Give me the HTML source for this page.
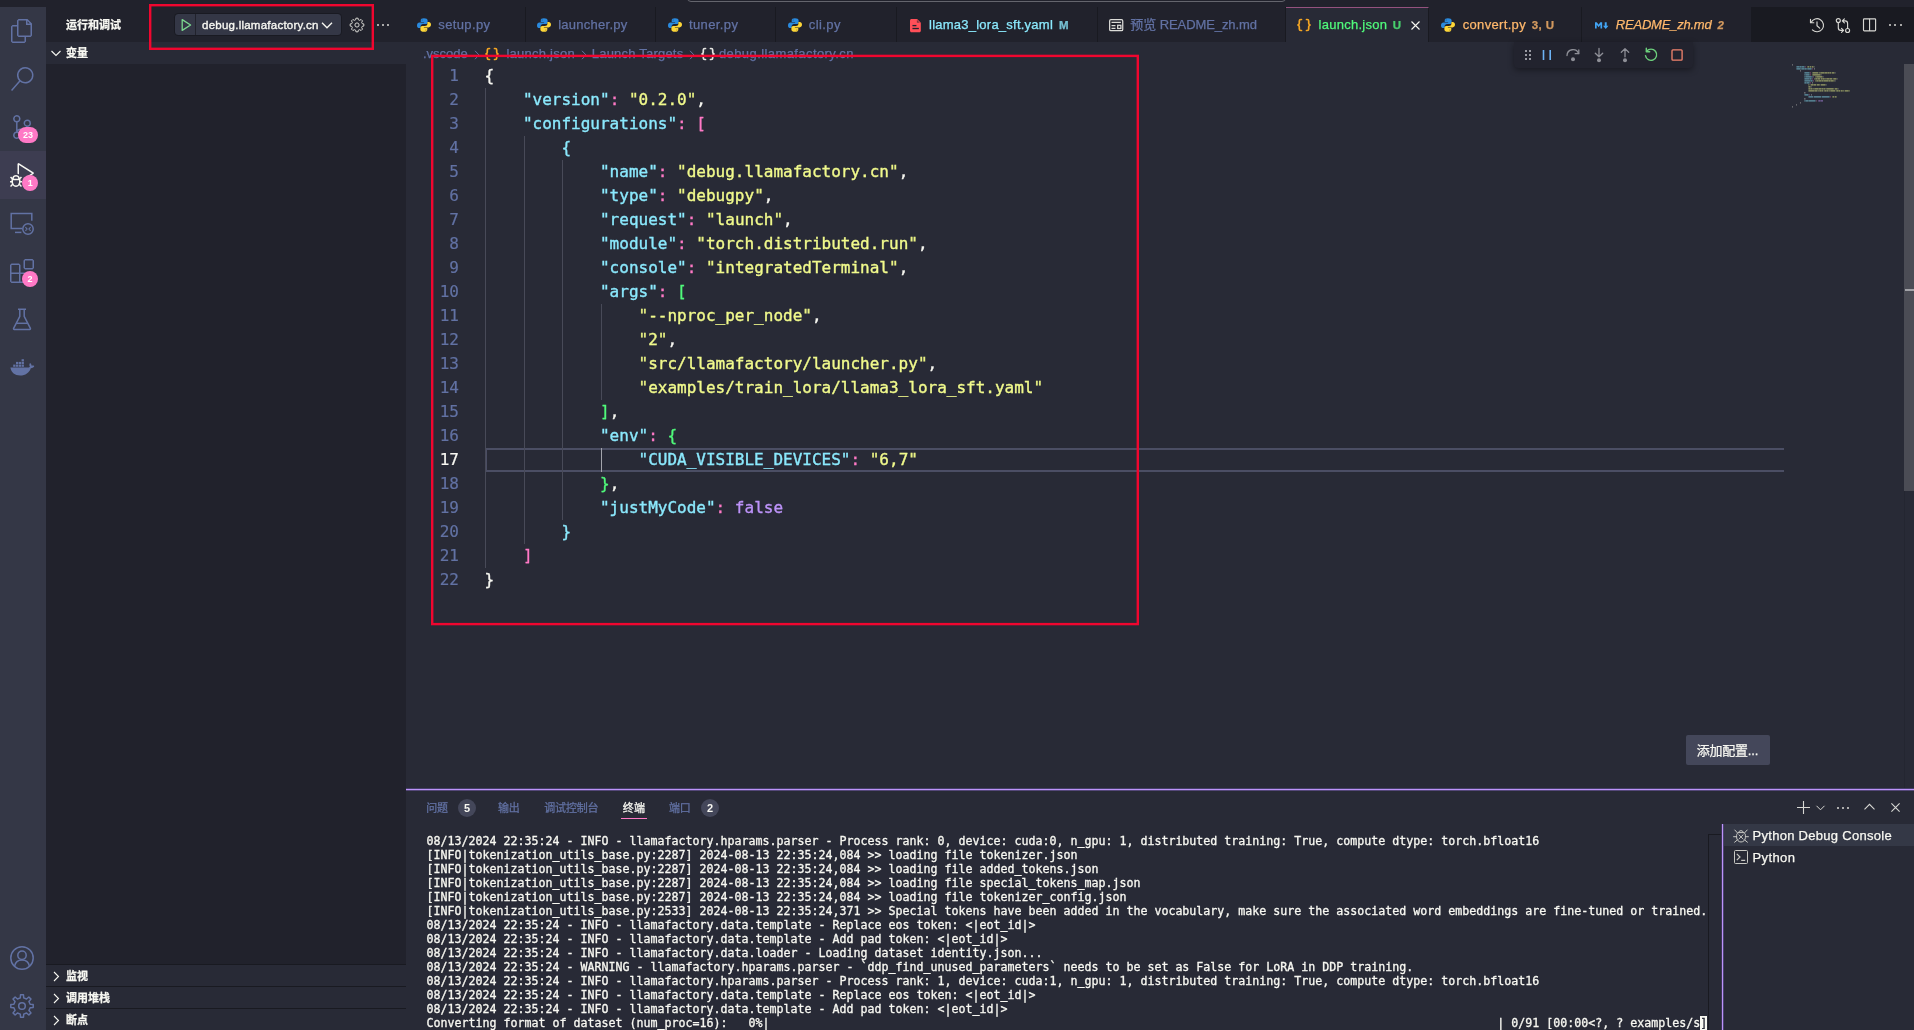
<!DOCTYPE html>
<html lang="zh-CN"><head><meta charset="utf-8"><title>launch.json - Visual Studio Code</title>
<style>
*{box-sizing:border-box;margin:0;padding:0}
html,body{width:1914px;height:1030px;overflow:hidden;background:#282a36}
body{font-family:'Liberation Sans','Noto Sans CJK SC',sans-serif;font-size:13px;color:#f8f8f2;position:relative}
.a{position:absolute}
#root{position:absolute;left:0;top:0;width:1914px;height:1030px;will-change:transform}
.t{position:absolute;white-space:pre;-webkit-text-stroke:.25px}
svg{position:absolute;overflow:visible}
.code{position:absolute;left:484.400px;top:64px;font-family:'DejaVu Sans Mono','Liberation Mono','Noto Sans CJK SC',monospace;font-size:16px;line-height:24px;white-space:pre;color:#f8f8f2;-webkit-text-stroke:.35px}
.ln{position:absolute;left:406px;top:64px;width:53px;text-align:right;font-family:'DejaVu Sans Mono','Liberation Mono','Noto Sans CJK SC',monospace;font-size:16px;line-height:24px;color:#6272a4;white-space:pre;-webkit-text-stroke:.2px}
.k{color:#8be9fd}.s{color:#f1fa8c}.q{color:#e9f284}.p{color:#ff79c6}.c{color:#8be9fd}.g{color:#50fa7b}.v{color:#bd93f9}
.term{position:absolute;left:426.500px;top:834px;font-family:'DejaVu Sans Mono','Liberation Mono','Noto Sans CJK SC',monospace;font-size:11.63px;line-height:14px;white-space:pre;color:#f8f8f2;-webkit-text-stroke:.3px}
.guide{position:absolute;width:1px;background:#484a58}
</style></head>
<body>
<div id="root">
<div class="a" style="left:0px;top:0px;width:1914px;height:7px;background:#21222c;"></div>
<div class="a" style="left:0px;top:7px;width:46px;height:1023px;background:#343746;"></div>
<div class="a" style="left:46px;top:7px;width:360px;height:1023px;background:#21222c;"></div>
<div class="a" style="left:406px;top:7px;width:1508px;height:35px;background:#191a21;"></div>
<div class="a" style="left:406px;top:42px;width:1508px;height:747px;background:#282a36;"></div>
<div class="a" style="left:687px;top:-6px;width:599px;height:8px;background:transparent;border:1.300px solid #64656d;border-radius:6px;"></div>
<div class="a" style="left:0px;top:151px;width:46px;height:48px;background:#3d3d51;"></div>
<svg style="left:10px;top:19px" width="24" height="24" viewBox="0 0 24 24" ><path fill="#6272a4" d="M17.5 0h-9L7 1.5V6H2.5L1 7.5v15.07L2.5 24h12.07L16 22.57V18h4.7l1.3-1.43V4.5L17.5 0zm0 2.12l2.38 2.38H17.5V2.12zm-3 20.38h-12v-15H7v9.07L8.5 18h6v4.5zm6-6h-12v-15H16V6h4.5v10.5z"/></svg>
<svg style="left:10px;top:67px" width="24" height="24" viewBox="0 0 24 24" ><path fill="#6272a4" d="M15.25 0a8.25 8.25 0 0 0-6.18 13.72L1 22.88l1.12 1 8.05-9.12A8.251 8.251 0 1 0 15.25.01V0zm0 15a6.75 6.75 0 1 1 0-13.5 6.75 6.75 0 0 1 0 13.5z"/></svg>
<svg style="left:10px;top:115px" width="24" height="24" viewBox="0 0 24 24" ><path fill="#6272a4" d="M21.007 8.222A3.738 3.738 0 0 0 15.045 5.2a3.737 3.737 0 0 0 1.156 6.583 2.988 2.988 0 0 1-2.668 1.67h-2.99a4.456 4.456 0 0 0-2.989 1.165V7.4a3.737 3.737 0 1 0-1.494 0v9.117a3.776 3.776 0 1 0 1.816.099 2.99 2.99 0 0 1 2.668-1.667h2.99a4.484 4.484 0 0 0 4.223-3.039 3.736 3.736 0 0 0 3.25-3.687zM4.565 3.738a2.242 2.242 0 1 1 4.484 0 2.242 2.242 0 0 1-4.484 0zm4.484 16.441a2.242 2.242 0 1 1-4.484 0 2.242 2.242 0 0 1 4.484 0zm8.221-9.715a2.242 2.242 0 1 1 0-4.485 2.242 2.242 0 0 1 0 4.485z"/></svg>
<svg style="left:10px;top:163px" width="24" height="24" viewBox="0 0 24 24" ><path fill="#f8f8f2" d="M10.94 13.5l-1.32 1.32a3.73 3.73 0 0 0-7.24 0L1.06 13.5 0 14.56l1.72 1.72-.22.22V18H0v1.5h1.5v.08c.077.489.214.966.41 1.42L0 22.94 1.06 24l1.65-1.65A4.308 4.308 0 0 0 6 24a4.31 4.31 0 0 0 3.29-1.65L10.94 24 12 22.94 10.09 21c.198-.464.336-.951.41-1.45v-.1H12V18h-1.5v-1.5l-.22-.22L12 14.56l-1.06-1.06zM6 13.5a2.25 2.25 0 0 1 2.25 2.25h-4.5A2.25 2.25 0 0 1 6 13.5zm3 6a3.33 3.33 0 0 1-3 3 3.33 3.33 0 0 1-3-3v-2.25h6v2.25zm14.76-9.9v1.26L13.5 17.37V15.6l8.5-5.37L9 2v9.46a5.07 5.07 0 0 0-1.5-.72V.63L8.64 0l15.12 9.6z"/></svg>
<svg style="left:10px;top:211px" width="24" height="24" viewBox="0 0 24 24" ><g fill="none" stroke="#6272a4" stroke-width="1.5"><path d="M12.2 17.6H1.2V2.6h20.6v7.2"/><path d="M5 21.4h6.4"/><circle cx="18" cy="18" r="5.2"/><path stroke-width="1.1" d="M15.4 16.2l1.7 1.8-1.7 1.8M20.6 16.2l-1.7 1.8 1.7 1.8"/></g></svg>
<svg style="left:10px;top:259px" width="24" height="24" viewBox="0 0 24 24" ><path fill="#6272a4" d="M13.5 1.5L15 0h7.5L24 1.5V9l-1.5 1.5H15L13.5 9V1.5zm1.5 0V9h7.5V1.5H15zM0 15V6l1.500-1.500H9L10.500 6v7.500H18l1.500 1.500v7.500L18 24H1.500L0 22.500V15zm9-1.500V6H1.500v7.500H9zM9 15H1.500v7.500H9V15zm1.500 7.500H18V15h-7.500v7.500z"/></svg>
<svg style="left:10px;top:307px" width="24" height="24" viewBox="0 0 24 24" ><g fill="none" stroke="#6272a4" stroke-width="1.5" stroke-linejoin="round"><path d="M8 2.2h8M9.8 2.2v7.2L3.6 21.4a.7.7 0 0 0 .6 1h15.6a.7.7 0 0 0 .6-1L14.200 9.400V2.200"/><path d="M6.300 16.300h11.400"/></g></svg>
<svg style="left:10px;top:356px" width="24" height="24" viewBox="0 0 24 24" ><g fill="#6272a4"><rect x="3.2" y="8.6" width="2.3" height="2.2"/><rect x="6.0" y="8.6" width="2.3" height="2.2"/><rect x="8.8" y="8.6" width="2.3" height="2.2"/><rect x="11.6" y="8.6" width="2.3" height="2.2"/><rect x="6.0" y="5.9" width="2.3" height="2.2"/><rect x="8.8" y="5.9" width="2.3" height="2.2"/><rect x="11.6" y="5.9" width="2.3" height="2.2"/><rect x="11.6" y="3.2" width="2.3" height="2.2"/><path d="M0.400 11.600h17.300c.9 0 1.700-.300 2.200-.900-.700-1-.800-2.600.100-3.700 1 .700 1.600 1.700 1.700 2.700.9-.300 1.900-.200 2.600.300-.400 1.300-1.700 2.200-3.500 2.200-1.600 4.600-5.300 7.300-10.600 7.300-5.400 0-8.900-2.500-9.800-7.900z"/></g></svg>
<svg style="left:10px;top:946px" width="24" height="24" viewBox="0 0 24 24" ><g fill="none" stroke="#6272a4" stroke-width="1.5"><circle cx="12" cy="12" r="11.2"/><circle cx="12" cy="9.300" r="4.200"/><path d="M4.600 20.200c.6-3.700 3.600-6.200 7.400-6.200s6.800 2.500 7.400 6.200"/></g></svg>
<svg style="left:10px;top:994px" width="24" height="24" viewBox="0 0 24 24" ><g fill="none" stroke="#6272a4" stroke-width="1.5" stroke-linejoin="round"><path d="M10.30 3.88 L10.51 0.80 L13.49 0.80 L13.70 3.88 L16.54 5.05 L18.87 3.03 L20.97 5.13 L18.95 7.46 L20.12 10.30 L23.20 10.51 L23.20 13.49 L20.12 13.70 L18.95 16.54 L20.97 18.87 L18.87 20.97 L16.54 18.95 L13.70 20.12 L13.49 23.20 L10.51 23.20 L10.30 20.12 L7.46 18.95 L5.13 20.97 L3.03 18.87 L5.05 16.54 L3.88 13.70 L0.80 13.49 L0.80 10.51 L3.88 10.30 L5.05 7.46 L3.03 5.13 L5.13 3.03 L7.46 5.05Z"/><circle cx="12" cy="12" r="3.300"/></g></svg>
<div class="a" style="left:18.0px;top:127.0px;width:20px;height:16px;border-radius:8.0px;background:#ff79c6;color:#fff;font-size:9px;font-weight:700;line-height:16px;text-align:center">23</div>
<div class="a" style="left:22.3px;top:175.0px;width:16px;height:16px;border-radius:8.0px;background:#ff79c6;color:#fff;font-size:9px;font-weight:700;line-height:16px;text-align:center">1</div>
<div class="a" style="left:22.0px;top:271.0px;width:16px;height:16px;border-radius:8.0px;background:#ff79c6;color:#fff;font-size:9px;font-weight:700;line-height:16px;text-align:center">2</div>
<div class="a" style="left:175px;top:14px;width:166px;height:21px;background:#343746;border-radius:3.500px;box-shadow:0 0 0 1px rgba(0,0,0,.22);"></div>
<div class="a" style="left:195px;top:14px;width:1px;height:21px;background:#21222c;"></div>
<svg style="left:178px;top:17px" width="16" height="16" viewBox="0 0 16 16" ><path fill="none" stroke="#7bd88f" stroke-width="1.300" stroke-linejoin="round" d="M4.200 2.600v10.800L12.600 8z"/></svg>
<svg style="left:321px;top:17px" width="12" height="16" viewBox="0 0 12 16" ><path fill="none" stroke="#f8f8f2" stroke-width="1.300" d="M1 5.800l5 5 5-5"/></svg>
<svg style="left:349px;top:17px" width="16" height="16" viewBox="0 0 16 16" ><g fill="none" stroke="#d6d6d2" stroke-width="1" stroke-linejoin="round"><path d="M6.69 2.76 L6.92 1.18 L9.08 1.18 L9.31 2.76 L10.78 3.37 L12.06 2.42 L13.58 3.94 L12.63 5.22 L13.24 6.69 L14.82 6.92 L14.82 9.08 L13.24 9.31 L12.63 10.78 L13.58 12.06 L12.06 13.58 L10.78 12.63 L9.31 13.24 L9.08 14.82 L6.92 14.82 L6.69 13.24 L5.22 12.63 L3.94 13.58 L2.42 12.06 L3.37 10.78 L2.76 9.31 L1.18 9.08 L1.18 6.92 L2.76 6.69 L3.37 5.22 L2.42 3.94 L3.94 2.42 L5.22 3.37Z"/><circle cx="8" cy="8" r="2.100"/></g></svg>
<div class="a" style="left:377px;top:24px;width:2px;height:2px;background:#f8f8f2;border-radius:1px;opacity:.85;"></div>
<div class="a" style="left:382px;top:24px;width:2px;height:2px;background:#f8f8f2;border-radius:1px;opacity:.85;"></div>
<div class="a" style="left:387px;top:24px;width:2px;height:2px;background:#f8f8f2;border-radius:1px;opacity:.85;"></div>
<div class="a" style="left:46px;top:42px;width:360px;height:22px;background:#282a36;"></div>
<svg style="left:51px;top:48px" width="10" height="10" viewBox="0 0 10 10" ><path fill="none" stroke="#f8f8f2" stroke-width="1.100" d="M0.500 3l4.500 4.500L9.500 3"/></svg>
<div class="a" style="left:46px;top:964px;width:360px;height:22px;background:#282a36;border-top:1px solid #191a21;"></div>
<svg style="left:52px;top:971px" width="8" height="11" viewBox="0 0 8 11" ><path fill="none" stroke="#f8f8f2" stroke-width="1.100" d="M2 1l4.500 4.500L2 10"/></svg>
<div class="a" style="left:46px;top:986px;width:360px;height:22px;background:#282a36;border-top:1px solid #191a21;"></div>
<svg style="left:52px;top:993px" width="8" height="11" viewBox="0 0 8 11" ><path fill="none" stroke="#f8f8f2" stroke-width="1.100" d="M2 1l4.500 4.500L2 10"/></svg>
<div class="a" style="left:46px;top:1008px;width:360px;height:22px;background:#282a36;border-top:1px solid #191a21;"></div>
<svg style="left:52px;top:1015px" width="8" height="11" viewBox="0 0 8 11" ><path fill="none" stroke="#f8f8f2" stroke-width="1.100" d="M2 1l4.500 4.500L2 10"/></svg>
<div class="a" style="left:406px;top:7px;width:120px;height:35px;background:#21222c;border-right:1px solid #191a21;"></div>
<svg style="left:416px;top:17px" width="16" height="16" viewBox="0 0 16 16" ><path fill="#2a8ade" d="M7.900 1.200c-2.300 0-3.200.9-3.200 2.100v1.700h3.400v.6H3.400C2 5.600 1 6.700 1 8.400c0 1.700 1 2.700 2.300 2.700h1.300V9.300c0-1.300 1.100-2.300 2.400-2.300h2.800c1 0 1.800-.8 1.800-1.800V3.300c0-1.200-1.300-2.100-3.700-2.100z"/><circle cx="6.100" cy="3.100" r=".5" fill="#21222c" opacity=".6"/><path fill="#fdd638" d="M8.100 14.800c2.300 0 3.200-.9 3.200-2.100V11H7.900v-.6h4.700c1.400 0 2.400-1.100 2.400-2.800 0-1.700-1-2.700-2.300-2.700h-1.300v1.800c0 1.300-1.100 2.300-2.400 2.300H6.200c-1 0-1.800.8-1.800 1.800v1.900c0 1.200 1.300 2.100 3.700 2.100z"/><circle cx="9.900" cy="12.900" r=".5" fill="#21222c" opacity=".6"/></svg>
<div class="a" style="left:526px;top:7px;width:130px;height:35px;background:#21222c;border-right:1px solid #191a21;"></div>
<svg style="left:536px;top:17px" width="16" height="16" viewBox="0 0 16 16" ><path fill="#2a8ade" d="M7.900 1.200c-2.300 0-3.200.9-3.200 2.100v1.700h3.400v.6H3.400C2 5.600 1 6.700 1 8.400c0 1.700 1 2.700 2.300 2.700h1.300V9.300c0-1.300 1.100-2.300 2.400-2.300h2.800c1 0 1.800-.8 1.800-1.800V3.300c0-1.200-1.300-2.100-3.700-2.100z"/><circle cx="6.100" cy="3.100" r=".5" fill="#21222c" opacity=".6"/><path fill="#fdd638" d="M8.100 14.800c2.300 0 3.200-.9 3.200-2.100V11H7.900v-.6h4.700c1.400 0 2.400-1.100 2.400-2.800 0-1.700-1-2.700-2.300-2.700h-1.300v1.800c0 1.300-1.100 2.300-2.400 2.300H6.200c-1 0-1.800.8-1.800 1.800v1.900c0 1.200 1.300 2.100 3.700 2.100z"/><circle cx="9.900" cy="12.900" r=".5" fill="#21222c" opacity=".6"/></svg>
<div class="a" style="left:656px;top:7px;width:120px;height:35px;background:#21222c;border-right:1px solid #191a21;"></div>
<svg style="left:667px;top:17px" width="16" height="16" viewBox="0 0 16 16" ><path fill="#2a8ade" d="M7.900 1.200c-2.300 0-3.200.9-3.200 2.100v1.700h3.400v.6H3.400C2 5.600 1 6.700 1 8.400c0 1.700 1 2.700 2.300 2.700h1.300V9.300c0-1.300 1.100-2.300 2.400-2.300h2.800c1 0 1.800-.8 1.800-1.800V3.300c0-1.200-1.300-2.100-3.700-2.100z"/><circle cx="6.100" cy="3.100" r=".5" fill="#21222c" opacity=".6"/><path fill="#fdd638" d="M8.100 14.800c2.300 0 3.200-.9 3.200-2.100V11H7.900v-.6h4.700c1.400 0 2.400-1.100 2.400-2.800 0-1.700-1-2.700-2.300-2.700h-1.300v1.800c0 1.300-1.100 2.300-2.400 2.300H6.200c-1 0-1.800.8-1.800 1.800v1.900c0 1.200 1.300 2.100 3.700 2.100z"/><circle cx="9.900" cy="12.900" r=".5" fill="#21222c" opacity=".6"/></svg>
<div class="a" style="left:776px;top:7px;width:121px;height:35px;background:#21222c;border-right:1px solid #191a21;"></div>
<svg style="left:787px;top:17px" width="16" height="16" viewBox="0 0 16 16" ><path fill="#2a8ade" d="M7.900 1.200c-2.300 0-3.200.9-3.200 2.100v1.700h3.400v.6H3.400C2 5.600 1 6.700 1 8.400c0 1.700 1 2.700 2.300 2.700h1.300V9.300c0-1.300 1.100-2.300 2.400-2.300h2.800c1 0 1.800-.8 1.800-1.800V3.300c0-1.200-1.300-2.100-3.700-2.100z"/><circle cx="6.100" cy="3.100" r=".5" fill="#21222c" opacity=".6"/><path fill="#fdd638" d="M8.100 14.800c2.300 0 3.200-.9 3.200-2.100V11H7.900v-.6h4.700c1.400 0 2.400-1.100 2.400-2.800 0-1.700-1-2.700-2.300-2.700h-1.300v1.800c0 1.300-1.100 2.300-2.400 2.300H6.200c-1 0-1.800.8-1.800 1.800v1.900c0 1.200 1.300 2.100 3.700 2.100z"/><circle cx="9.900" cy="12.900" r=".5" fill="#21222c" opacity=".6"/></svg>
<div class="a" style="left:897px;top:7px;width:200.5px;height:35px;background:#21222c;border-right:1px solid #191a21;"></div>
<svg style="left:909.5px;top:18.8px" width="11.3" height="13.2" viewBox="0 0 12 14" ><path fill="#ff4f58" d="M1.600 0h6L11.500 3.900V12.400c0 .9-.7 1.600-1.600 1.600H1.600C.7 14 0 13.300 0 12.400V1.600C0 .7.700 0 1.600 0z"/><path fill="#21222c" d="M7.300 .9v3.200h3.200z" opacity=".55"/><rect x="2.600" y="6.300" width="4.200" height="1.400" fill="#21222c"/><rect x="2.600" y="9.400" width="6.800" height="1.400" fill="#21222c"/></svg>
<div class="a" style="left:1097.5px;top:7px;width:188.5px;height:35px;background:#21222c;border-right:1px solid #191a21;"></div>
<svg style="left:1108.7px;top:18.7px" width="14.4" height="12.4" viewBox="0 0 14.4 12.4" ><g fill="none" stroke="#dcdcd8" stroke-width="1.250"><rect x=".65" y=".65" width="13.100" height="11.100" rx="1.300"/><path d="M2.500 3.500h9.400M2.500 6.700h4M2.500 9.300h4"/><rect x="8.700" y="6.300" width="3.200" height="3.200"/></g></svg>
<div class="a" style="left:1286px;top:7px;width:143px;height:35px;background:#282a36;border-right:1px solid #191a21;border-top:1px solid #94527e;"></div>
<svg style="left:1296px;top:17px" width="16" height="16" viewBox="0 0 16 16" ><g fill="none" stroke="#f5a623" stroke-width="1.700" stroke-linecap="round" stroke-linejoin="round"><path d="M5.500 2.500H4.800c-.9 0-1.500.6-1.500 1.500v2.200c0 .8-.5 1.500-1.400 1.800.9.300 1.400 1 1.400 1.800V12c0 .9.600 1.500 1.500 1.500h.7"/><path d="M10.500 2.500h.7c.9 0 1.500.6 1.500 1.500v2.200c0 .8.500 1.500 1.400 1.800-.9.300-1.400 1-1.400 1.800V12c0 .9-.6 1.500-1.500 1.500h-.7"/></g></svg>
<div class="a" style="left:1429px;top:7px;width:153px;height:35px;background:#21222c;border-right:1px solid #191a21;"></div>
<svg style="left:1440px;top:17px" width="16" height="16" viewBox="0 0 16 16" ><path fill="#2a8ade" d="M7.900 1.200c-2.300 0-3.200.9-3.200 2.100v1.700h3.400v.6H3.400C2 5.600 1 6.700 1 8.400c0 1.700 1 2.700 2.300 2.700h1.300V9.300c0-1.300 1.100-2.300 2.400-2.300h2.800c1 0 1.800-.8 1.800-1.800V3.300c0-1.200-1.300-2.100-3.700-2.100z"/><circle cx="6.100" cy="3.100" r=".5" fill="#21222c" opacity=".6"/><path fill="#fdd638" d="M8.100 14.800c2.300 0 3.200-.9 3.200-2.100V11H7.900v-.6h4.700c1.400 0 2.400-1.100 2.400-2.800 0-1.700-1-2.700-2.300-2.700h-1.300v1.800c0 1.300-1.100 2.300-2.400 2.300H6.200c-1 0-1.800.8-1.800 1.800v1.900c0 1.200 1.300 2.100 3.700 2.100z"/><circle cx="9.900" cy="12.900" r=".5" fill="#21222c" opacity=".6"/></svg>
<div class="a" style="left:1582px;top:7px;width:170px;height:35px;background:#21222c;border-right:1px solid #191a21;"></div>
<svg style="left:1594.5px;top:20.5px" width="14.3" height="8.94" viewBox="0 0 16 10" ><path fill="#42a5f5" d="M0 8.500v-7h2l2 2.600 2-2.600h2v7H6.100V4.300L4 6.900 1.900 4.300v4.200zM12 8.900L8.900 5.300h2V1.500h2.200v3.800h2z"/></svg>
<svg style="left:1411px;top:20.5px" width="9" height="9" viewBox="0 0 9 9" ><path fill="none" stroke="#f8f8f2" stroke-width="1.100" d="M.5.5l8 8M8.500.5l-8 8"/></svg>
<svg style="left:1809px;top:17px" width="16" height="16" viewBox="0 0 16 16" ><g fill="none" stroke="#d8d8d4" stroke-width="1.150" stroke-linecap="round" stroke-linejoin="round"><path d="M2.100 5.500A6.500 6.500 0 1 1 3.400 12.800"/><path d="M1.500 2.400v3.300h3.300"/><path d="M8 4.800v3.900l2.700 2.400"/></g></svg>
<svg style="left:1835px;top:17px" width="16" height="16" viewBox="0 0 16 16" ><g fill="none" stroke="#d8d8d4" stroke-width="1.150" stroke-linecap="round" stroke-linejoin="round"><circle cx="3.300" cy="3.600" r="2"/><circle cx="12.600" cy="13.500" r="2"/><path d="M3.300 5.700v5c0 1.500 1 2.600 2.500 2.600h2.600M6.500 11.300l2.100 2-2.100 2"/><path d="M12.600 11.400V6.400c0-1.500-1-2.600-2.500-2.600H7.500M9.400 1.800l-2.100 2 2.100 2"/></g></svg>
<svg style="left:1862px;top:17px" width="16" height="16" viewBox="0 0 16 16" ><g fill="none" stroke="#d8d8d4" stroke-width="1.150"><rect x="1.500" y="1.800" width="12.100" height="12.100" rx=".8"/><path d="M7.550 1.800v12.100"/></g></svg>
<div class="a" style="left:1889.0px;top:24px;width:2px;height:2px;background:#d8d8d4;border-radius:1px;"></div>
<div class="a" style="left:1894.3px;top:24px;width:2px;height:2px;background:#d8d8d4;border-radius:1px;"></div>
<div class="a" style="left:1899.6px;top:24px;width:2px;height:2px;background:#d8d8d4;border-radius:1px;"></div>
<svg style="left:473.7px;top:49.5px" width="6" height="10" viewBox="0 0 6 10" ><path fill="none" stroke="#6272a4" stroke-width="1" d="M1 .8l4 4.200-4 4.200"/></svg>
<svg style="left:580.7px;top:49.5px" width="6" height="10" viewBox="0 0 6 10" ><path fill="none" stroke="#6272a4" stroke-width="1" d="M1 .8l4 4.200-4 4.200"/></svg>
<svg style="left:689px;top:49.5px" width="6" height="10" viewBox="0 0 6 10" ><path fill="none" stroke="#6272a4" stroke-width="1" d="M1 .8l4 4.200-4 4.200"/></svg>
<svg style="left:484px;top:46px" width="16" height="16" viewBox="0 0 16 16" ><g fill="none" stroke="#f5a623" stroke-width="1.700" stroke-linecap="round" stroke-linejoin="round"><path d="M5.500 2.500H4.800c-.9 0-1.500.6-1.500 1.500v2.200c0 .8-.5 1.500-1.400 1.800.9.300 1.400 1 1.400 1.800V12c0 .9.600 1.500 1.500 1.500h.7"/><path d="M10.500 2.500h.7c.9 0 1.500.6 1.500 1.500v2.200c0 .8.500 1.500 1.400 1.800-.9.300-1.400 1-1.400 1.800V12c0 .9-.6 1.500-1.500 1.500h-.7"/></g></svg>
<svg style="left:700px;top:46px" width="16" height="16" viewBox="0 0 16 16" ><g fill="none" stroke="#e6e6e2" stroke-width="1.700" stroke-linecap="round" stroke-linejoin="round"><path d="M5.500 2.500H4.800c-.9 0-1.500.6-1.500 1.500v2.200c0 .8-.5 1.500-1.400 1.800.9.300 1.400 1 1.400 1.800V12c0 .9.600 1.500 1.500 1.500h.7"/><path d="M10.500 2.500h.7c.9 0 1.500.6 1.500 1.500v2.200c0 .8.500 1.500 1.400 1.800-.9.300-1.400 1-1.400 1.800V12c0 .9-.6 1.500-1.500 1.500h-.7"/></g></svg>
<div class="a" style="left:485px;top:448px;width:1299px;height:24px;background:transparent;border-top:2px solid #4b4e64;border-bottom:2px solid #4b4e64;border-left:2px solid #4b4e64;"></div>
<div class="guide" style="left:485.00px;top:88px;height:480px;"></div>
<div class="guide" style="left:523.53px;top:136px;height:408px;"></div>
<div class="guide" style="left:562.06px;top:160px;height:360px;"></div>
<div class="guide" style="left:600.59px;top:304px;height:96px;"></div>
<div class="guide" style="left:600.59px;top:448px;height:24px;background:#a3a4ab;"></div>
<div class="code">{
    <span class="k">"version"</span><span class="p">:</span> <span class="q">"</span><span class="s">0.2.0</span><span class="q">"</span>,
    <span class="k">"configurations"</span><span class="p">:</span> <span class="p">[</span>
        <span class="c">{</span>
            <span class="k">"name"</span><span class="p">:</span> <span class="q">"</span><span class="s">debug.llamafactory.cn</span><span class="q">"</span>,
            <span class="k">"type"</span><span class="p">:</span> <span class="q">"</span><span class="s">debugpy</span><span class="q">"</span>,
            <span class="k">"request"</span><span class="p">:</span> <span class="q">"</span><span class="s">launch</span><span class="q">"</span>,
            <span class="k">"module"</span><span class="p">:</span> <span class="q">"</span><span class="s">torch.distributed.run</span><span class="q">"</span>,
            <span class="k">"console"</span><span class="p">:</span> <span class="q">"</span><span class="s">integratedTerminal</span><span class="q">"</span>,
            <span class="k">"args"</span><span class="p">:</span> <span class="g">[</span>
                <span class="q">"</span><span class="s">--nproc_per_node</span><span class="q">"</span>,
                <span class="q">"</span><span class="s">2</span><span class="q">"</span>,
                <span class="q">"</span><span class="s">src/llamafactory/launcher.py</span><span class="q">"</span>,
                <span class="q">"</span><span class="s">examples/train_lora/llama3_lora_sft.yaml</span><span class="q">"</span>
            <span class="g">]</span>,
            <span class="k">"env"</span><span class="p">:</span> <span class="g">{</span>
                <span class="k">"CUDA_VISIBLE_DEVICES"</span><span class="p">:</span> <span class="q">"</span><span class="s">6,7</span><span class="q">"</span>
            <span class="g">}</span>,
            <span class="k">"justMyCode"</span><span class="p">:</span> <span class="v">false</span>
        <span class="c">}</span>
    <span class="p">]</span>
}</div>
<div class="ln">1
2
3
4
5
6
7
8
9
10
11
12
13
14
15
16
<span style="color:#f8f8f2">17</span>
18
19
20
21
22</div>
<svg style="left:1792px;top:64px" width="70" height="44" viewBox="0 0 70 44" ><path d="M0 0.9h1M22 4.9h1M8 6.9h1M20 18.9h1M12 28.9h1M19 30.9h1M12 34.9h1M8 38.9h1M4 40.9h1M0 42.9h1" stroke="#c9c9c6" stroke-width="1.300" opacity="0.5" fill="none"/><path d="M4 2.9h1M12 2.9h1M4 4.9h1M19 4.9h1M12 8.9h1M17 8.9h1M12 10.9h1M17 10.9h1M12 12.9h1M20 12.9h1M12 14.9h1M19 14.9h1M12 16.9h1M20 16.9h1M12 18.9h1M17 18.9h1M12 30.9h1M16 30.9h1M16 32.9h1M37 32.9h1M12 36.9h1M23 36.9h1" stroke="#8be9fd" stroke-width="1.300" opacity="0.34" fill="none"/><path d="M5 2.9h2M8 2.9h1M10 2.9h2M5 4.9h3M10 4.9h2M13 4.9h1M16 4.9h3M13 8.9h4M14 10.9h3M14 12.9h5M13 14.9h4M18 14.9h1M13 16.9h5M19 16.9h1M13 18.9h1M15 18.9h2M13 30.9h3M17 32.9h4M22 32.9h7M30 32.9h7M14 36.9h2M17 36.9h6" stroke="#8be9fd" stroke-width="1.300" opacity="0.58" fill="none"/><path d="M7 2.9h1M9 2.9h1M8 4.9h2M12 4.9h1M14 4.9h2M13 10.9h1M13 12.9h1M19 12.9h1M17 14.9h1M18 16.9h1M14 18.9h1M13 36.9h1M16 36.9h1" stroke="#8be9fd" stroke-width="1.300" opacity="0.42" fill="none"/><path d="M13 2.9h1M20 4.9h1M18 8.9h1M18 10.9h1M21 12.9h1M20 14.9h1M21 16.9h1M18 18.9h1M17 30.9h1M38 32.9h1M24 36.9h1" stroke="#ff79c6" stroke-width="1.300" opacity="0.34" fill="none"/><path d="M15 2.9h1M21 2.9h1M20 8.9h1M42 8.9h1M20 10.9h1M28 10.9h1M23 12.9h1M30 12.9h1M22 14.9h1M44 14.9h1M23 16.9h1M42 16.9h1M16 20.9h1M33 20.9h1M16 22.9h1M18 22.9h1M16 24.9h1M20 24.9h1M33 24.9h1M45 24.9h1M16 26.9h1M25 26.9h1M36 26.9h1M57 26.9h1M40 32.9h1M44 32.9h1" stroke="#f1fa8c" stroke-width="1.300" opacity="0.34" fill="none"/><path d="M16 2.9h1M18 2.9h1M20 2.9h1M21 8.9h5M29 8.9h3M33 8.9h2M36 8.9h1M38 8.9h1M40 8.9h2M21 10.9h7M25 12.9h5M24 14.9h1M26 14.9h2M29 14.9h1M31 14.9h1M35 14.9h2M38 14.9h2M42 14.9h2M25 16.9h1M27 16.9h2M30 16.9h1M32 16.9h4M37 16.9h1M39 16.9h2M19 20.9h2M22 20.9h2M25 20.9h2M29 20.9h4M17 22.9h1M17 24.9h1M19 24.9h1M23 24.9h3M27 24.9h2M30 24.9h1M32 24.9h1M35 24.9h6M43 24.9h2M17 26.9h5M23 26.9h2M28 26.9h1M30 26.9h1M33 26.9h1M35 26.9h1M39 26.9h4M45 26.9h1M47 26.9h1M49 26.9h1M53 26.9h3M41 32.9h1M43 32.9h1" stroke="#f1fa8c" stroke-width="1.300" opacity="0.58" fill="none"/><path d="M17 2.9h1M19 2.9h1M26 8.9h1M39 8.9h1M28 14.9h1M40 14.9h1M17 20.9h2M24 20.9h1M28 20.9h1M42 24.9h1M31 26.9h1M43 26.9h1M48 26.9h1M52 26.9h1M42 32.9h1" stroke="#f1fa8c" stroke-width="1.300" opacity="0.22" fill="none"/><path d="M22 2.9h1M43 8.9h1M29 10.9h1M31 12.9h1M45 14.9h1M43 16.9h1M34 20.9h1M19 22.9h1M46 24.9h1M13 28.9h1M13 34.9h1" stroke="#f8f8f2" stroke-width="1.300" opacity="0.22" fill="none"/><path d="M27 8.9h2M32 8.9h1M35 8.9h1M37 8.9h1M24 12.9h1M23 14.9h1M25 14.9h1M30 14.9h1M32 14.9h3M37 14.9h1M41 14.9h1M24 16.9h1M26 16.9h1M29 16.9h1M31 16.9h1M36 16.9h1M38 16.9h1M41 16.9h1M21 20.9h1M27 20.9h1M18 24.9h1M21 24.9h2M26 24.9h1M29 24.9h1M31 24.9h1M34 24.9h1M41 24.9h1M22 26.9h1M26 26.9h2M29 26.9h1M32 26.9h1M34 26.9h1M37 26.9h2M44 26.9h1M46 26.9h1M50 26.9h2M56 26.9h1" stroke="#f1fa8c" stroke-width="1.300" opacity="0.42" fill="none"/><path d="M21 32.9h1M29 32.9h1" stroke="#8be9fd" stroke-width="1.300" opacity="0.22" fill="none"/><path d="M26 36.9h1M28 36.9h1" stroke="#bd93f9" stroke-width="1.300" opacity="0.42" fill="none"/><path d="M27 36.9h1M29 36.9h2" stroke="#bd93f9" stroke-width="1.300" opacity="0.58" fill="none"/></svg>
<div class="a" style="left:1904px;top:64px;width:1px;height:725px;background:#242631;"></div>
<div class="a" style="left:1904px;top:64px;width:10px;height:427px;background:#4b4c55;"></div>
<div class="a" style="left:1905px;top:289px;width:9px;height:2px;background:#a2a2a8;"></div>
<div class="a" style="left:1514px;top:42px;width:179px;height:26px;background:#22232e;box-shadow:0 2px 6px rgba(0,0,0,.4);border-radius:0 0 4px 4px"></div>
<svg style="left:1525.0px;top:50px" width="2" height="2" viewBox="0 0 2 2" ><rect width="2" height="2" fill="#9a9ba3"/></svg>
<svg style="left:1529.4px;top:50px" width="2" height="2" viewBox="0 0 2 2" ><rect width="2" height="2" fill="#9a9ba3"/></svg>
<svg style="left:1525.0px;top:54px" width="2" height="2" viewBox="0 0 2 2" ><rect width="2" height="2" fill="#9a9ba3"/></svg>
<svg style="left:1529.4px;top:54px" width="2" height="2" viewBox="0 0 2 2" ><rect width="2" height="2" fill="#9a9ba3"/></svg>
<svg style="left:1525.0px;top:58px" width="2" height="2" viewBox="0 0 2 2" ><rect width="2" height="2" fill="#9a9ba3"/></svg>
<svg style="left:1529.4px;top:58px" width="2" height="2" viewBox="0 0 2 2" ><rect width="2" height="2" fill="#9a9ba3"/></svg>
<svg style="left:1540px;top:47px" width="16" height="16" viewBox="0 0 16 16" ><path stroke="#6db3f5" stroke-width="1.600" d="M3.500 3.100v10M10.200 3.100v10"/></svg>
<svg style="left:1565px;top:47px" width="16" height="16" viewBox="0 0 16 16" ><g fill="none" stroke="#8e8f97" stroke-width="1.300" stroke-linecap="round" stroke-linejoin="round"><path d="M2 8.500A6 6 0 0 1 13.600 6.500"/><path d="M10.200 6.700h3.600V3"/></g><circle cx="8" cy="12.300" r="2" fill="#8e8f97"/></svg>
<svg style="left:1591px;top:47px" width="16" height="16" viewBox="0 0 16 16" ><g fill="none" stroke="#8e8f97" stroke-width="1.300" stroke-linecap="round" stroke-linejoin="round"><path d="M8 1.500v8M4.300 6.200L8 9.800l3.700-3.600"/></g><circle cx="8" cy="13.200" r="2" fill="#8e8f97"/></svg>
<svg style="left:1617px;top:47px" width="16" height="16" viewBox="0 0 16 16" ><g fill="none" stroke="#8e8f97" stroke-width="1.300" stroke-linecap="round" stroke-linejoin="round"><path d="M8 9.800v-8M4.300 5.200L8 1.600l3.700 3.600"/></g><circle cx="8" cy="13.200" r="2" fill="#8e8f97"/></svg>
<svg style="left:1643px;top:47px" width="16" height="16" viewBox="0 0 16 16" ><g fill="none" stroke="#6ccf7c" stroke-width="1.400" stroke-linecap="round" stroke-linejoin="round"><path d="M3.600 4.300A5.600 5.600 0 1 1 2.500 8.600"/><path d="M3.300 1.300v3.400h3.400"/></g></svg>
<svg style="left:1669px;top:47px" width="16" height="16" viewBox="0 0 16 16" ><rect x="3" y="2.900" width="10.100" height="10.300" rx=".9" fill="none" stroke="#f4846d" stroke-width="1.300"/></svg>
<div class="a" style="left:1686px;top:735px;width:84px;height:30px;background:#44475a;border-radius:2px;"></div>
<div class="a" style="left:406px;top:790px;width:1508px;height:240px;background:#282a36;"></div>
<div class="a" style="left:406px;top:788px;width:1508px;height:1px;background:#46406a;"></div>
<div class="a" style="left:406px;top:789px;width:1508px;height:1px;background:#bd93f9;"></div>
<div class="a" style="left:406px;top:790px;width:1508px;height:1px;background:#55487a;"></div>
<div class="a" style="left:621px;top:818px;width:26px;height:1.3px;background:#ff79c6;"></div>
<div class="a" style="left:458px;top:799px;width:18px;height:18px;border-radius:9px;background:#44475a;color:#f8f8f2;font-size:11px;font-weight:700;line-height:18px;text-align:center">5</div>
<div class="a" style="left:701px;top:799px;width:18px;height:18px;border-radius:9px;background:#44475a;color:#f8f8f2;font-size:11px;font-weight:700;line-height:18px;text-align:center">2</div>
<svg style="left:1797px;top:801px" width="13" height="13" viewBox="0 0 13 13" ><path stroke="#d8d8d4" stroke-width="1.100" d="M6.500 0v13M0 6.500h13"/></svg>
<svg style="left:1816px;top:805px" width="9" height="6" viewBox="0 0 9 6" ><path fill="none" stroke="#d8d8d4" stroke-width="1" d="M.5.800l4 4 4-4"/></svg>
<div class="a" style="left:1837.0px;top:806.8px;width:2px;height:2px;background:#d8d8d4;border-radius:1px;"></div>
<div class="a" style="left:1842.2px;top:806.8px;width:2px;height:2px;background:#d8d8d4;border-radius:1px;"></div>
<div class="a" style="left:1847.4px;top:806.8px;width:2px;height:2px;background:#d8d8d4;border-radius:1px;"></div>
<svg style="left:1863.5px;top:803px" width="11" height="7" viewBox="0 0 11 7" ><path fill="none" stroke="#d8d8d4" stroke-width="1.100" d="M.5 6.300l5-5 5 5"/></svg>
<svg style="left:1890.6px;top:803px" width="9" height="9" viewBox="0 0 9 9" ><path fill="none" stroke="#d8d8d4" stroke-width="1.100" d="M.4.4l8.200 8.200M8.600.4l-8.200 8.200"/></svg>
<div class="term">08/13/2024 22:35:24 - INFO - llamafactory.hparams.parser - Process rank: 0, device: cuda:0, n_gpu: 1, distributed training: True, compute dtype: torch.bfloat16
[INFO|tokenization_utils_base.py:2287] 2024-08-13 22:35:24,084 &gt;&gt; loading file tokenizer.json
[INFO|tokenization_utils_base.py:2287] 2024-08-13 22:35:24,084 &gt;&gt; loading file added_tokens.json
[INFO|tokenization_utils_base.py:2287] 2024-08-13 22:35:24,084 &gt;&gt; loading file special_tokens_map.json
[INFO|tokenization_utils_base.py:2287] 2024-08-13 22:35:24,084 &gt;&gt; loading file tokenizer_config.json
[INFO|tokenization_utils_base.py:2533] 2024-08-13 22:35:24,371 &gt;&gt; Special tokens have been added in the vocabulary, make sure the associated word embeddings are fine-tuned or trained.
08/13/2024 22:35:24 - INFO - llamafactory.data.template - Replace eos token: &lt;|eot_id|&gt;
08/13/2024 22:35:24 - INFO - llamafactory.data.template - Add pad token: &lt;|eot_id|&gt;
08/13/2024 22:35:24 - INFO - llamafactory.data.loader - Loading dataset identity.json...
08/13/2024 22:35:24 - WARNING - llamafactory.hparams.parser - `ddp_find_unused_parameters` needs to be set as False for LoRA in DDP training.
08/13/2024 22:35:24 - INFO - llamafactory.hparams.parser - Process rank: 1, device: cuda:1, n_gpu: 1, distributed training: True, compute dtype: torch.bfloat16
08/13/2024 22:35:24 - INFO - llamafactory.data.template - Replace eos token: &lt;|eot_id|&gt;
08/13/2024 22:35:24 - INFO - llamafactory.data.template - Add pad token: &lt;|eot_id|&gt;
Converting format of dataset (num_proc=16):   0%|                                                                                                        | 0/91 [00:00&lt;?, ? examples/s<span style="background:#f8f8f2;color:#282a36">]</span></div>
<div class="a" style="left:1708px;top:834px;width:1px;height:196px;background:#191a21;"></div>
<div class="a" style="left:1708px;top:834px;width:14px;height:1px;background:#191a21;"></div>
<div class="a" style="left:1721px;top:824px;width:1px;height:206px;background:#3c3658;"></div>
<div class="a" style="left:1722px;top:824px;width:1px;height:206px;background:#bd93f9;"></div>
<div class="a" style="left:1723px;top:824px;width:1px;height:206px;background:#4a4170;"></div>
<div class="a" style="left:1724px;top:824px;width:190px;height:22px;background:#343846;"></div>
<svg style="left:1733px;top:827px" width="16" height="16" viewBox="0 0 16 16" ><g fill="none" stroke="#c8c8c4" stroke-width="1" stroke-linecap="round"><path d="M3.600 8.200c0-1.600 1.200-2.600 2.400-2.600h4c1.200 0 2.400 1 2.400 2.600v2.200c0 2.600-2 4.600-4.400 4.600s-4.400-2-4.400-4.600z"/><path d="M5.500 5.500A2.600 2.600 0 0 1 10.500 5.500"/><path d="M.6 9.700h2.900M12.500 9.700h2.900M1.800 3l2.600 2.800M14.200 3l-2.600 2.800M1.600 15.200l2.700-2.200M14.400 15.200l-2.700-2.200"/><path d="M5.900 7.800l4.200 4.200M10.100 7.800l-4.200 4.200"/></g></svg>
<svg style="left:1734px;top:850px" width="14" height="14" viewBox="0 0 14 14" ><g fill="none" stroke="#c8c8c4" stroke-width="1"><rect x=".5" y=".5" width="13" height="13" rx="1"/><path stroke-width="1.200" d="M2.800 3.800l3.200 3.200-3.200 3.200M7.200 10.400h4"/></g></svg>
<span class="t" style="left:66.00px;top:18.00px;line-height:15px;font-size:11px;color:#f8f8f2;font-weight:700;">运行和调试</span>
<span class="t" style="left:202.00px;top:17.30px;line-height:16px;font-size:11.5px;color:#f8f8f2;letter-spacing:0.242px;-webkit-text-stroke:.35px;">debug.llamafactory.cn</span>
<span class="t" style="left:66.00px;top:45.50px;line-height:15px;font-size:11px;color:#f8f8f2;font-weight:700;">变量</span>
<span class="t" style="left:66.00px;top:969.00px;line-height:15px;font-size:11px;color:#f8f8f2;font-weight:700;">监视</span>
<span class="t" style="left:66.00px;top:991.00px;line-height:15px;font-size:11px;color:#f8f8f2;font-weight:700;">调用堆栈</span>
<span class="t" style="left:66.00px;top:1013.00px;line-height:15px;font-size:11px;color:#f8f8f2;font-weight:700;">断点</span>
<span class="t" style="left:438.30px;top:15.50px;line-height:18px;font-size:13px;color:#6272a4;letter-spacing:0.363px;">setup.py</span>
<span class="t" style="left:558.20px;top:15.50px;line-height:18px;font-size:13px;color:#6272a4;letter-spacing:0.260px;">launcher.py</span>
<span class="t" style="left:689.00px;top:15.50px;line-height:18px;font-size:13px;color:#6272a4;letter-spacing:0.391px;">tuner.py</span>
<span class="t" style="left:808.80px;top:15.50px;line-height:18px;font-size:13px;color:#6272a4;letter-spacing:0.415px;">cli.py</span>
<span class="t" style="left:929.00px;top:15.50px;line-height:18px;font-size:13px;color:#8be9fd;letter-spacing:0.241px;">llama3_lora_sft.yaml</span>
<span class="t" style="left:1059.00px;top:17.00px;line-height:16px;font-size:11.5px;color:#8be9fd;font-weight:700;letter-spacing:-0.294px;opacity:.8;">M</span>
<span class="t" style="left:1130.30px;top:15.50px;line-height:18px;font-size:13px;color:#6272a4;letter-spacing:-0.084px;">预览 README_zh.md</span>
<span class="t" style="left:1318.50px;top:15.50px;line-height:18px;font-size:13px;color:#50fa7b;letter-spacing:0.272px;">launch.json</span>
<span class="t" style="left:1392.70px;top:17.00px;line-height:16px;font-size:11.5px;color:#50fa7b;font-weight:700;letter-spacing:-1.013px;opacity:.8;">U</span>
<span class="t" style="left:1462.70px;top:15.50px;line-height:18px;font-size:13px;color:#ffb86c;letter-spacing:0.335px;">convert.py</span>
<span class="t" style="left:1531.80px;top:17.00px;line-height:16px;font-size:11.5px;color:#ffb86c;font-weight:700;letter-spacing:0.369px;opacity:.8;">3, U</span>
<span class="t" style="left:1615.80px;top:15.50px;line-height:18px;font-size:13px;color:#ffb86c;font-style:italic;letter-spacing:-0.214px;">README_zh.md</span>
<span class="t" style="left:1717.50px;top:17.00px;line-height:16px;font-size:11.5px;color:#ffb86c;font-weight:700;font-style:italic;letter-spacing:0.094px;opacity:.8;">2</span>
<span class="t" style="left:423.00px;top:45.00px;line-height:18px;font-size:13px;color:#6272a4;letter-spacing:-0.019px;">.vscode</span>
<span class="t" style="left:506.40px;top:45.00px;line-height:18px;font-size:13px;color:#6272a4;letter-spacing:0.252px;">launch.json</span>
<span class="t" style="left:591.80px;top:45.00px;line-height:18px;font-size:13px;color:#6272a4;letter-spacing:0.210px;">Launch Targets</span>
<span class="t" style="left:718.90px;top:45.00px;line-height:18px;font-size:13px;color:#6272a4;letter-spacing:0.419px;">debug.llamafactory.cn</span>
<span class="t" style="left:1696.70px;top:742.00px;line-height:18px;font-size:13px;color:#f8f8f2;letter-spacing:-0.207px;">添加配置...</span>
<span class="t" style="left:426.30px;top:801.00px;line-height:15px;font-size:11px;color:#6272a4;letter-spacing:-0.300px;">问题</span>
<span class="t" style="left:498.00px;top:801.00px;line-height:15px;font-size:11px;color:#6272a4;letter-spacing:-0.200px;">输出</span>
<span class="t" style="left:544.30px;top:801.00px;line-height:15px;font-size:11px;color:#6272a4;letter-spacing:-0.200px;">调试控制台</span>
<span class="t" style="left:622.70px;top:801.00px;line-height:15px;font-size:11px;color:#f8f8f2;letter-spacing:0.300px;">终端</span>
<span class="t" style="left:669.00px;top:801.00px;line-height:15px;font-size:11px;color:#6272a4;letter-spacing:-0.300px;">端口</span>
<span class="t" style="left:1752.50px;top:826.50px;line-height:18px;font-size:13px;color:#f8f8f2;letter-spacing:0.289px;">Python Debug Console</span>
<span class="t" style="left:1752.50px;top:848.50px;line-height:18px;font-size:13px;color:#f8f8f2;letter-spacing:0.403px;">Python</span>
<svg style="left:0;top:0" width="1914" height="1030" viewBox="0 0 1914 1030"><g fill="none" stroke="#f0062f" stroke-width="2.400"><rect x="150.200" y="5.200" width="222.600" height="43.600"/><rect x="432.200" y="55.900" width="705.600" height="568.200"/></g></svg>
</div>
</body></html>
